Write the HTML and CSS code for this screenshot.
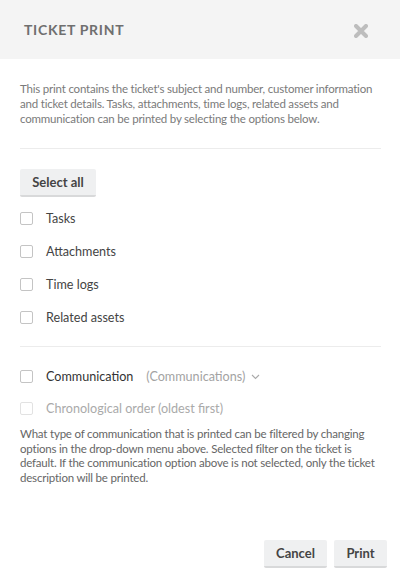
FILE: index.html
```html
<!DOCTYPE html>
<html>
<head>
<meta charset="utf-8">
<link rel="stylesheet" href="styles.css">
</head>
<body>
<div class="dialog">
  <header class="header">
    <h1 class="title">TICKET PRINT</h1>
    <svg class="close" width="14" height="14" viewBox="0 0 14 14"><path d="M2 2 L12 12 M12 2 L2 12" stroke="#bdbdbd" stroke-width="4" stroke-linecap="round"/></svg>
  </header>
  <div class="body">
    <p class="intro">This print contains the ticket's subject and number, customer information and ticket details. Tasks, attachments, time logs, related assets and communication can be printed by selecting the options below.</p>
    <hr class="divider">
    <button class="btn select-all">Select all</button>
    <ul class="options">
      <li class="option"><span class="box"></span><span>Tasks</span></li>
      <li class="option"><span class="box"></span><span>Attachments</span></li>
      <li class="option"><span class="box"></span><span>Time logs</span></li>
      <li class="option"><span class="box"></span><span>Related assets</span></li>
    </ul>
    <hr class="divider second">
    <div class="option comm"><span class="box"></span><span class="comm-label">Communication</span><span class="filter">(Communications)<svg class="chev" width="9" height="6" viewBox="0 0 9 6"><path d="M1 1 L4.5 4.5 L8 1" fill="none" stroke="#aaa" stroke-width="1.1"/></svg></span></div>
    <div class="option disabled"><span class="box"></span><span>Chronological order (oldest first)</span></div>
    <p class="note">What type of communication that is printed can be filtered by changing options in the drop-down menu above. Selected filter on the ticket is default. If the communication option above is not selected, only the ticket description will be printed.</p>
  </div>
  <footer class="footer">
    <button class="btn">Cancel</button>
    <button class="btn">Print</button>
  </footer>
</div>
</body>
</html>
```
FILE: styles.css
```css
* { box-sizing: border-box; }
html, body { margin: 0; padding: 0; background: #fff; }
body { font-family: "Lato", "Noto Sans", sans-serif; color: #444; width: 400px; height: 581px; }
.dialog { display: flex; flex-direction: column; height: 581px; }
.header {
  height: 59px; background: #f4f4f4;
  display: flex; align-items: center; justify-content: space-between;
  padding: 0 32px 0 24px;
}
.title {
  margin: 0; font-family: "Lato", sans-serif; font-weight: 700; font-size: 14px;
  letter-spacing: 0.7px; color: #6f6f6f;
}
.close { display: block; margin-top: 2px; }
.body { padding: 0 19px 0 20px; flex: 1; }
.intro {
  margin: 22px 0 0; font-size: 11.5px; line-height: 15px; color: #7a7a7a; letter-spacing: -0.2px;
}
.divider { border: 0; border-top: 1px solid #ececec; margin: 22px 0 0; }
.btn {
  font-family: inherit; font-size: 13px; font-weight: 700; color: #444;
  background: #eff0f1; border: 0; border-bottom: 2px solid #d8d9da; border-radius: 2px;
  height: 28px; padding: 0 12px; cursor: pointer;
}
.select-all { margin-top: 20px; width: 76px; padding: 0; }
.options { list-style: none; margin: 5px 0 0; padding: 0; }
.option {
  display: flex; align-items: center; height: 33px; font-size: 12.6px; color: #444;
}
.box {
  width: 13px; height: 13px; border: 1px solid #c4c4c4; border-radius: 2px;
  margin-right: 13px; flex: none; background: #fff;
}
.divider.second { margin-top: 12px; }
.comm { margin-top: 13px; }
.comm-label { color: #333; }
.filter { margin-left: 13px; color: #a3a3a3; display: flex; align-items: center; }
.chev { margin-left: 6px; }
.disabled { color: #aaa; margin-top: -1px; }
.disabled .box { border-color: #e2e2e2; }
.note {
  margin: 2px 0 0; font-size: 11.5px; line-height: 14.5px; color: #666; letter-spacing: -0.2px;
}
.footer {
  display: flex; justify-content: flex-end; gap: 7px; padding: 0 13px 13px 0;
}
.footer .btn { height: 28px; }
.footer .btn:first-child { width: 63px; padding: 0; }
.footer .btn:last-child { width: 53px; padding: 0; }
```
